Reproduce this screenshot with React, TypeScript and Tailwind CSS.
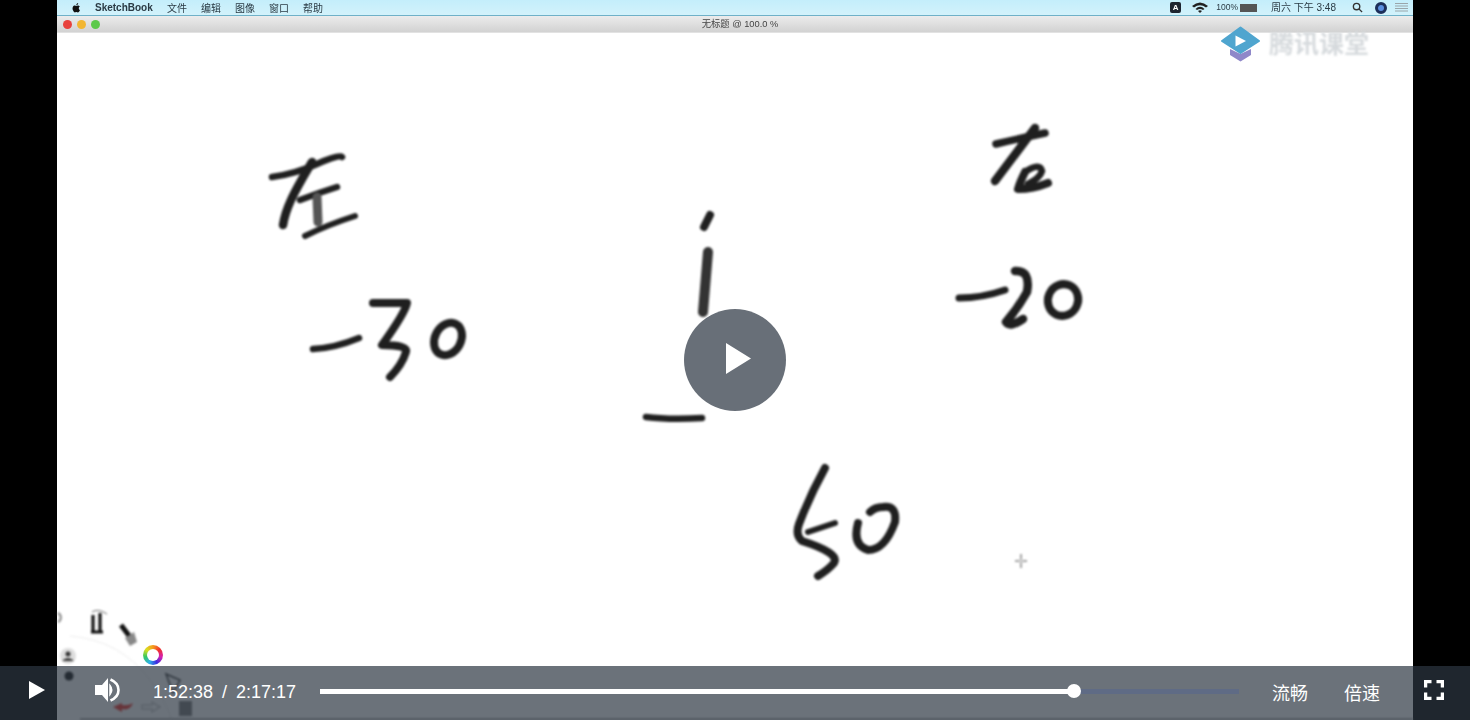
import { useState } from "react";

const inkStrokes = [
  // 左
  { d: "M272 177 Q295 174 317 164 T342 157", w: 6.5 },
  { d: "M312 162 Q297 187 291 200 T283 225", w: 8.5 },
  { d: "M300 200 Q318 193 337 187", w: 6.5 },
  { d: "M317 197 L318 222", w: 9, c: "#555" },
  { d: "M305 236 Q327 225 355 216", w: 6 },
  // -30
  { d: "M313 349 Q335 348 359 338", w: 6.5 },
  { d: "M373 303 L407 303 Q405 313 382 345 Q408 345 406 352 Q402 365 390 377", w: 8 },
  // i
  { d: "M710 215 L704 227", w: 8 },
  { d: "M708 252 L703 312", w: 10, c: "#333" },
  { d: "M646 417 Q670 420 702 418", w: 6.5 },
  // 右
  { d: "M996 144 Q1017 139 1045 133", w: 7.5 },
  { d: "M1035 128 Q1017 152 995 181", w: 8.5 },
  { d: "M1025 172 Q1020 182 1018 189 Q1033 189 1048 183", w: 8 },
  { d: "M1025 172 Q1040 162 1042 171 Q1040 178 1028 184", w: 6.5 },
  // -20
  { d: "M959 298 Q982 298 1005 290", w: 7 },
  { d: "M1015 271 Q1031 270 1027 292 Q1018 308 1006 322 Q1010 328 1023 319", w: 8.5 },
  // 60
  { d: "M825 468 Q810 495 799 524 Q795 535 802 541 Q840 553 834 563 Q828 570 818 576", w: 8 },
  { d: "M808 532 L835 523", w: 6 },
  { d: "M858 523 Q852 545 868 550 Q885 550 895 522 Q897 505 883 507 Q875 507 870 512", w: 8 },
];

function Handwriting() {
  return (
    <svg viewBox="57 33 1356 687" className="absolute inset-0 h-full w-full blur-[0.9px]">
      <g fill="none" strokeLinecap="round" strokeLinejoin="round" stroke="#1f1f1f">
        {inkStrokes.map((s) => (
          <path key={s.d} d={s.d} strokeWidth={s.w} stroke={s.c ?? "#1f1f1f"} />
        ))}
        <ellipse cx="448" cy="339" rx="13" ry="17" strokeWidth="8" transform="rotate(28 448 339)" />
        <ellipse cx="1063" cy="300" rx="15" ry="16" strokeWidth="8" transform="rotate(25 1063 300)" />
      </g>
      {/* cursor */}
      <path d="M1021 554V568M1015 561H1027" stroke="#444" strokeWidth="1" />
      <circle cx="1021" cy="561" r="2.500" fill="#ccc" />
      {/* sketchbook tool wheel */}
      <path d="M70 636 Q120 640 150 680 Q165 700 172 720" fill="none" stroke="#ececec" />
      <path d="M58 613 A5 5 0 0 1 58 622" fill="none" stroke="#888" strokeWidth="2" />
      <path d="M92 612 Q98 608 107 614" fill="none" stroke="#666" />
      <path d="M93 615V632M100 613V632M91 632H103" fill="none" stroke="#111" strokeWidth="3.200" />
      <path d="M121 625 L130 637" stroke="#111" strokeWidth="5" />
      <path d="M125 638 L134 632 L137 642 L130 646 Z" fill="#888" />
      <circle cx="68" cy="656" r="8" fill="#ddd" />
      <circle cx="68" cy="654" r="2.500" fill="#333" />
      <path d="M62 661 Q68 655 74 661 Z" fill="#333" />
      <circle cx="69" cy="676" r="4.500" fill="#111" />
      <path d="M166 674 L180 680 L173 693 Z" fill="none" stroke="#333" strokeWidth="1.500" />
      <path d="M113 707 L122 703 V705 Q128 706 133 703 Q130 711 122 709 V712 Z" fill="#f03028" />
      <path d="M160 707 L152 702 V705 H142 V709 H152 V712 Z" fill="none" stroke="#ccc" strokeWidth="1.500" />
      <path d="M179 701 H192 V716 H179 Z" fill="#777" />
      {/* sketchbook window bottom edge */}
      <path d="M80 718.500 H1413 V720 H80 Z" fill="#888" />
    </svg>
  );
}

function ColorRing() {
  return (
    <div className="absolute left-[86px] top-[612px] flex h-[20px] w-[20px] items-center justify-center rounded-full bg-[conic-gradient(#f59a1c,#ee3030,#d61fb0,#3a2fe0,#2fb0e8,#35c860,#d8e020,#f59a1c)] blur-[0.4px]">
      <span className="h-[12px] w-[12px] rounded-full bg-white" />
    </div>
  );
}

function Logo() {
  return (
    <div className="absolute right-[44px] top-[-7px] flex items-center gap-[8px]">
      <svg width="41" height="36" viewBox="0 0 41 36" className="blur-[0.5px]">
        <path d="M10 23 L20.500 28 L31 23 V29 L20.500 35.500 L10 29 Z" fill="#8f88c9" />
        <path d="M2 15 L20.500 1.500 L39 15 L20.500 27 Z" fill="#4fa5cf" stroke="#4fa5cf" strokeWidth="2" strokeLinejoin="round" />
        <path d="M15.500 9.500 L26 15 L15.500 20.500 Z" fill="#fff" />
      </svg>
      <span className="mb-[3px] text-[25px] font-bold leading-none text-[#d6dadd] blur-[0.8px] [font-family:'Noto_Sans_CJK_SC',sans-serif]">
        腾讯课堂
      </span>
    </div>
  );
}

function MenuBar() {
  const left = ["文件", "编辑", "图像", "窗口", "帮助"];
  return (
    <div className="flex h-[16px] items-center justify-between border-b border-[#6fb1c8] bg-gradient-to-b from-[#c4eefb] to-[#d2f2fb] pl-[14px] pr-[5px] text-[10px] text-[#2a3a44] blur-[0.5px] [font-family:'Noto_Sans_CJK_SC',sans-serif]">
      <div className="flex items-center">
        <svg width="11" height="12" viewBox="0 0 24 24" fill="#111">
          <path d="M17 12.500c0-2.600 2.100-3.800 2.200-3.900-1.200-1.800-3-2-3.700-2-1.600-.2-3 .9-3.900.9-.8 0-2-.9-3.300-.9-1.700 0-3.300 1-4.100 2.500-1.800 3-.5 7.600 1.300 10.100.8 1.200 1.800 2.600 3.100 2.500 1.300 0 1.700-.8 3.300-.8 1.500 0 2 .8 3.300.8 1.400 0 2.200-1.200 3-2.400 1-1.400 1.400-2.700 1.400-2.800-.1 0-2.600-1-2.600-4zM14.600 4.400c.7-.8 1.200-2 1-3.100-1 0-2.200.7-2.900 1.500-.6.700-1.200 1.900-1 3 1.100.1 2.200-.6 2.900-1.400z" />
        </svg>
        <span className="ml-[13px] w-[72px] font-bold [font-family:'Liberation_Sans',sans-serif]">SketchBook</span>
        <div className="flex gap-[14px]">
          {left.map((m) => (
            <span key={m} className="w-[20px]">{m}</span>
          ))}
        </div>
      </div>
      <div className="flex items-center text-[9.500px] [font-family:'Liberation_Sans','Noto_Sans_CJK_SC',sans-serif]">
        <span className="mr-[11px] flex h-[11px] w-[11px] items-center justify-center rounded-[2px] bg-[#1d2530] text-[8px] font-bold text-white">A</span>
        <svg width="16" height="11" viewBox="0 0 16 11" fill="#222" className="mr-[8px]">
          <path d="M0 4 Q8 -3 16 4 L14 5.500 Q8 1 2 5.500 Z M3.500 7 Q8 2.500 12.500 7 L11 8 Q8 6 5 8 Z M6 9 Q8 7.500 10 9 L8 11 Z" />
        </svg>
        <span className="mr-[2px] text-[8.500px]">100%</span>
        <span className="mr-[14px] h-[8px] w-[17px] bg-[#555]" />
        <span className="mr-[16px] text-[10px]">周六 下午 3:48</span>
        <svg width="11" height="11" viewBox="0 0 24 24" fill="none" stroke="#333" strokeWidth="3" className="mr-[12px]">
          <circle cx="10" cy="10" r="7" />
          <path d="M15 15L22 22" />
        </svg>
        <span className="mr-[8px] h-[12px] w-[12px] rounded-full border-[3px] border-[#1d2f5a] bg-[#5b8fe0]" />
        <svg width="13" height="11" viewBox="0 0 13 11" stroke="#9aa5aa">
          <path d="M0 1.500H13M0 4H13M0 6.500H13M0 9H13" />
        </svg>
      </div>
    </div>
  );
}

function TitleBar() {
  return (
    <div className="relative flex h-[17px] items-center justify-center border-b border-[#e2e2e2] bg-gradient-to-b from-[#ececec] to-[#d2d2d2] pt-[1px]">
      <div className="absolute left-[6px] flex gap-[5px] blur-[0.4px]">
        <span className="h-[9px] w-[9px] rounded-full bg-[#e8413c]" />
        <span className="h-[9px] w-[9px] rounded-full bg-[#f2b632]" />
        <span className="h-[9px] w-[9px] rounded-full bg-[#5cc94a]" />
      </div>
      <span className="ml-[10px] text-[9.300px] text-[#444] blur-[0.5px] [font-family:'Liberation_Sans','Noto_Sans_CJK_SC',sans-serif]">
        无标题 @ 100.0 %
      </span>
    </div>
  );
}

function PlayerControls({ onToggle }: { onToggle: () => void }) {
  const played = 82.05;
  return (
    <div className="absolute inset-x-0 bottom-0 flex h-[54px] items-center bg-[#2c3642]/70 pb-[4px] text-white [font-family:'Liberation_Sans',sans-serif]">
      <button onClick={onToggle} className="flex h-full w-[74px] items-center justify-center pb-[2px]" aria-label="play">
        <svg width="16" height="18" viewBox="0 0 16 18" fill="#fff">
          <path d="M0 0 L16 9 L0 18 Z" />
        </svg>
      </button>
      <svg width="25" height="24" viewBox="0 0 25 24" className="ml-[21px] mb-[2px]">
        <path d="M0 7 H7 L13 0 V24 L7 17 H0 Z" fill="#fff" />
        <path d="M15 7.500 Q18.500 12 15 16.500 Z" fill="#fff" stroke="#fff" strokeWidth="1.500" />
        <path d="M15.500 1.500 Q23.500 5 23.500 12 Q23.500 19 15.500 22.500" fill="none" stroke="#fff" strokeWidth="2.600" />
      </svg>
      <div className="ml-[33px] flex w-[167px] pt-[2px] text-[18px] tabular-nums">
        <span>1:52:38</span>
        <span className="mx-[9px]">/</span>
        <span>2:17:17</span>
      </div>
      <div className="h-[5px] flex-1 bg-[#5f6b85]">
        <div className="relative h-full bg-white" style={{ width: `${played}%` }}>
          <span className="absolute right-[-7px] top-[-4.500px] h-[14px] w-[14px] rounded-full bg-white" />
        </div>
      </div>
      <div className="ml-[33px] flex gap-[36px] pt-[2px] text-[18px] [font-family:'Noto_Sans_CJK_SC',sans-serif]">
        <span>流畅</span>
        <span>倍速</span>
      </div>
      <button className="flex h-full w-[90px] items-center justify-center pb-[2px] pl-[17px]" aria-label="fullscreen">
        <svg width="20" height="20" viewBox="0 0 20 20" fill="none" stroke="#fff" strokeWidth="3.500">
          <path d="M1.500 7.500V1.500H7.500M12.500 1.500H18.500V7.500M18.500 12.500V18.500H12.500M7.500 18.500H1.500V12.500" />
        </svg>
      </button>
    </div>
  );
}

export default function App() {
  const [playing, setPlaying] = useState(false);
  return (
    <div className="relative h-screen w-full overflow-hidden bg-black">
      <div className="mx-[57px] flex h-full flex-col bg-white">
        <MenuBar />
        <TitleBar />
        <div className="relative flex-1">
          <Handwriting />
          <ColorRing />
          <Logo />
        </div>
      </div>
      {!playing && (
        <button
          onClick={() => setPlaying(true)}
          className="absolute left-[684px] top-[309px] flex h-[102px] w-[102px] items-center justify-center rounded-full bg-[#686f78] pb-[3px]"
          aria-label="play"
        >
          <svg width="25" height="31" viewBox="0 0 25 31" fill="#fff" className="ml-[7px]">
            <path d="M0 0 L25 15.500 L0 31 Z" />
          </svg>
        </button>
      )}
      <PlayerControls onToggle={() => setPlaying((p) => !p)} />
    </div>
  );
}
